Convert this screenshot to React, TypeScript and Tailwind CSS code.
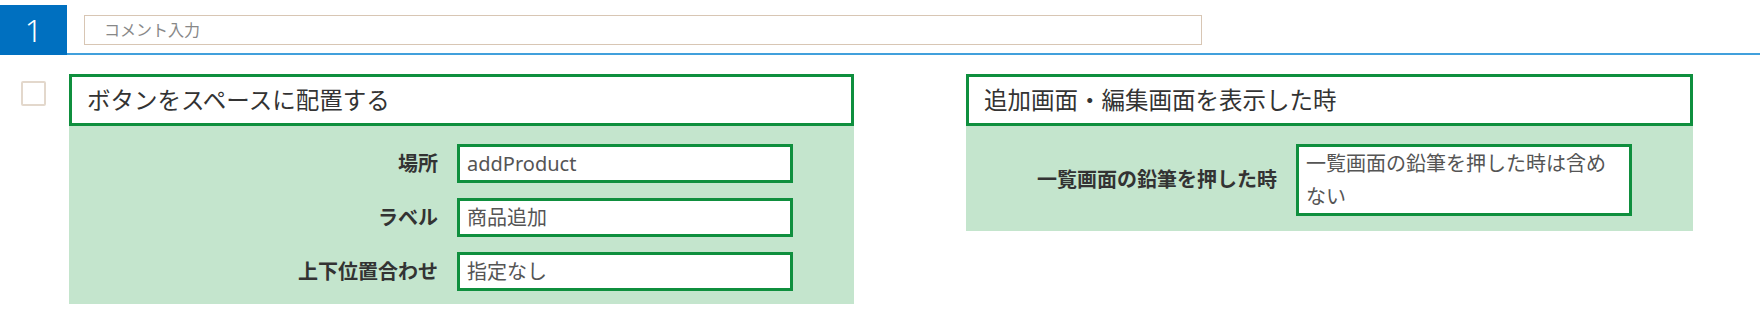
const green = 'border-[#0f8f3e]'

type Row = { label: string; value: string }

function Field({ row, labelWidth }: { row: Row; labelWidth: string }) {
  return (
    <div className="flex items-center">
      <div className={`${labelWidth} shrink-0 text-right text-[20px] font-bold text-[#333]`}>{row.label}</div>
      <div
        className={`ml-[19px] w-[336px] border-[3px] ${green} bg-white px-[7px] text-[20px] leading-[33px] text-[#555]`}
      >
        {row.value}
      </div>
    </div>
  )
}

function Panel({
  title,
  rows,
  width,
  labelWidth,
  pb,
}: {
  title: string
  rows: Row[]
  width: string
  labelWidth: string
  pb: string
}) {
  return (
    <div className={`${width} shrink-0`}>
      <div className={`h-[52px] border-[3px] ${green} bg-white pl-[15px] text-[23.5px] leading-[46px] text-[#333]`}>
        {title}
      </div>
      <div className={`flex flex-col gap-[15px] bg-[#c4e5cd] pt-[18px] ${pb}`}>
        {rows.map((row) => (
          <Field key={row.label} row={row} labelWidth={labelWidth} />
        ))}
      </div>
    </div>
  )
}

export default function App() {
  return (
    <div className="h-[309px] w-[1760px] bg-white font-['Noto_Sans','Noto_Sans_CJK_JP',sans-serif]">
      {/* header */}
      <div className="flex pt-[5px]">
        <div className="flex h-[50px] w-[67px] items-center justify-center bg-[#0070c0] text-[31px] font-light text-white">
          1
        </div>
        <div className="h-[50px] flex-1 border-b-2 border-[#41a0dc] pt-[10px]">
          <div className="ml-[17px] h-[30px] w-[1118px] border border-[#d8c6b4] pl-[19px] text-[16px] leading-[28px] text-[#888]">
            コメント入力
          </div>
        </div>
      </div>

      {/* body */}
      <div className="flex items-start pt-[19px]">
        <div className="ml-[21px] mt-[7px] h-[25px] w-[25px] shrink-0 rounded-[2px] border-2 border-[#e3d8cc] bg-white" />
        <div className="ml-[23px]">
          <Panel
            title="ボタンをスペースに配置する"
            width="w-[785px]"
            labelWidth="w-[369px]"
            pb="pb-[13px]"
            rows={[
              { label: '場所', value: 'addProduct' },
              { label: 'ラベル', value: '商品追加' },
              { label: '上下位置合わせ', value: '指定なし' },
            ]}
          />
        </div>
        <div className="ml-[112px]">
          <Panel
            title="追加画面・編集画面を表示した時"
            width="w-[727px]"
            labelWidth="w-[311px]"
            pb="pb-[15px]"
            rows={[{ label: '一覧画面の鉛筆を押した時', value: '一覧画面の鉛筆を押した時は含めない' }]}
          />
        </div>
      </div>
    </div>
  )
}
